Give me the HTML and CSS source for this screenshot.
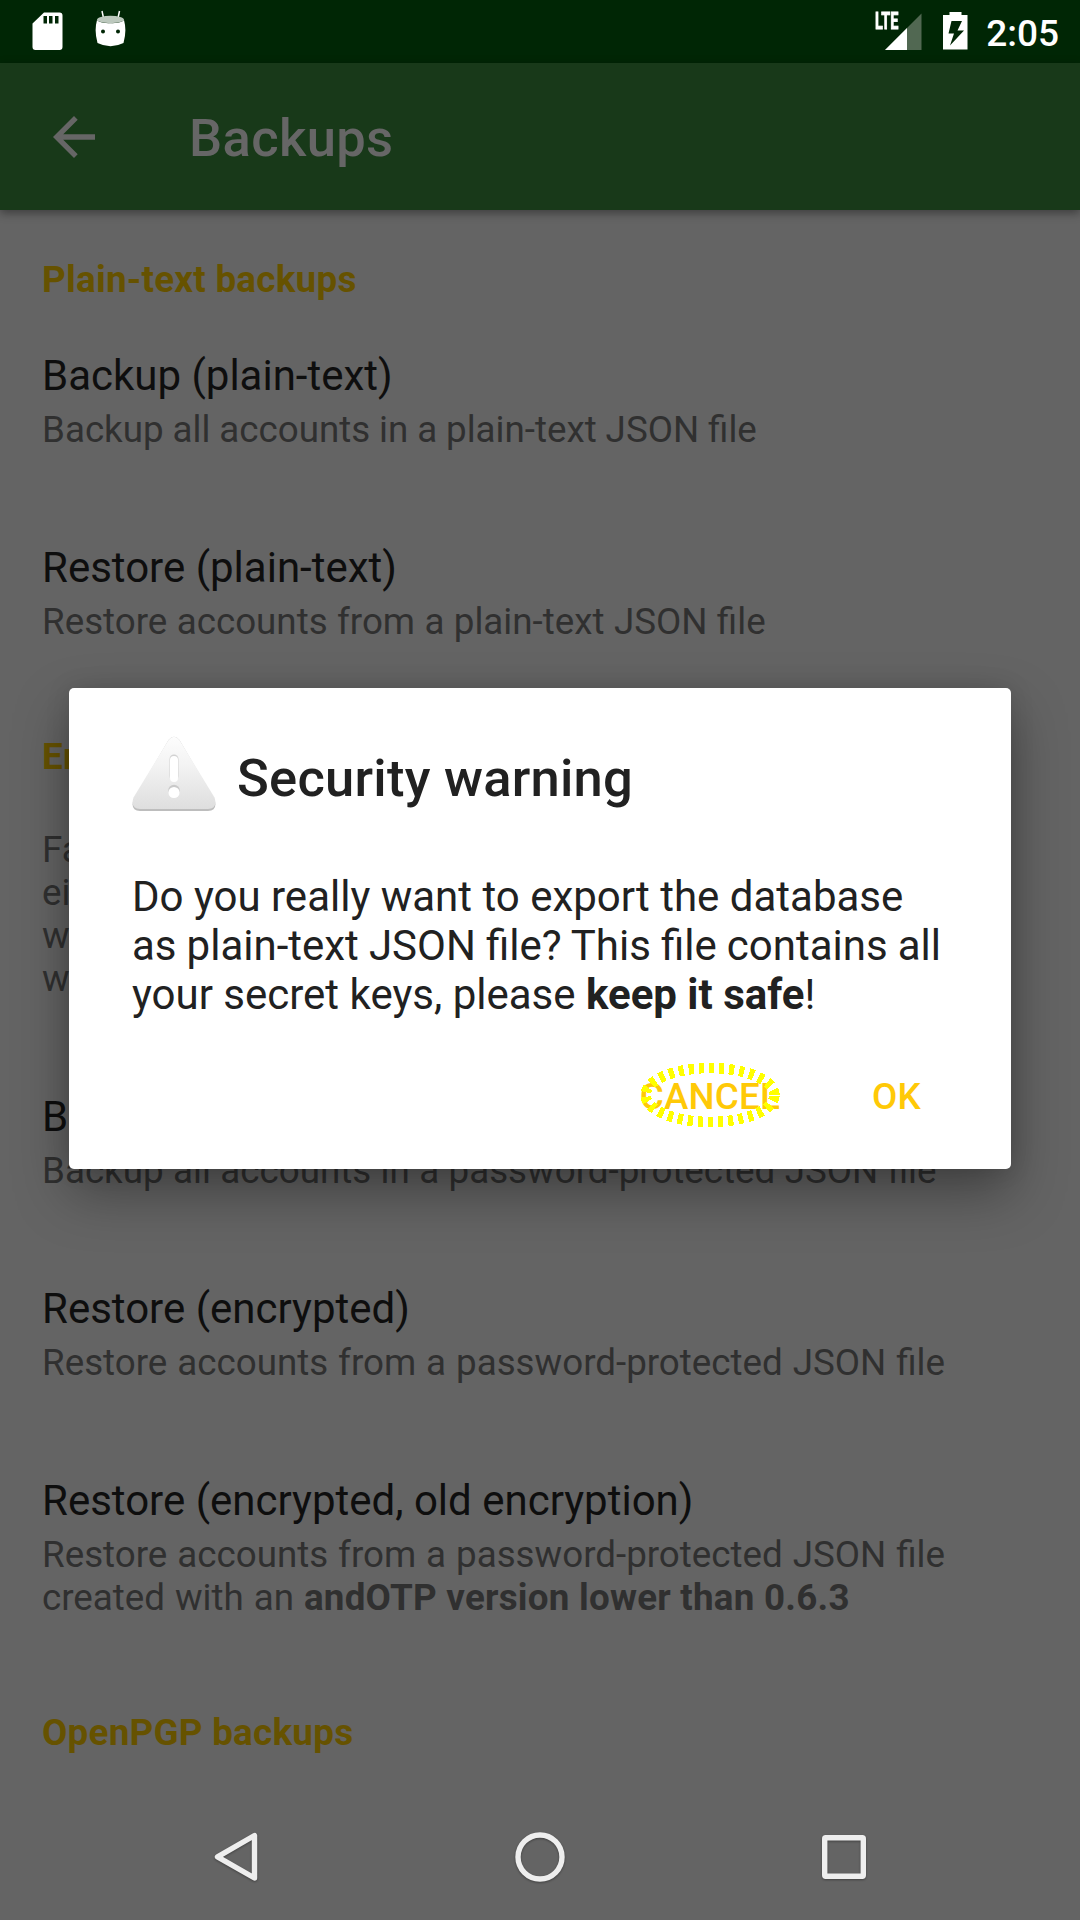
FILE: index.html
```html
<!DOCTYPE html>
<html lang="en">
<head>
<meta charset="utf-8">
<title>Backups</title>
<link rel="stylesheet" href="styles.css">
</head>
<body>
<div class="screen">
  <header class="status-bar">
    <div class="status-left">
      <svg class="icon-sd" width="31" height="39" viewBox="0 0 31 39"><path fill="#fff" fill-rule="evenodd" d="M12 .5H27.500Q30.500.5 30.500 3.500V35Q30.500 38 27.500 38H3.500Q.5 38 .5 35V11.500ZM11.500 4V11.500H15V4ZM17 4V11.500H20.500V4ZM23 4V11.500H26.500V4Z"/></svg>
      <svg class="icon-droid" width="31" height="37" viewBox="0 0 31 37"><path d="M7 1L8.500 8M24.500 1L23 8" stroke="#fff" stroke-width="1.500" fill="none"/><ellipse cx="15.500" cy="9.500" rx="13.500" ry="3.700" fill="#bcc8bd"/><path fill="#fff" fill-rule="evenodd" d="M2 10C5 14.300 26 14.300 29 10Q32 21 28.500 33Q15.500 39.500 2.500 33Q-1 21 2 10ZM6 21.500a2 2 0 1 0 4 0a2 2 0 1 0-4 0ZM21 21.500a2 2 0 1 0 4 0a2 2 0 1 0-4 0Z"/></svg>
    </div>
    <div class="status-right">
      <div class="signal">
        <svg width="37" height="37" viewBox="0 0 37 37"><path d="M36.500.5V37H0Z" fill="#516852"/><path d="M22 15V37H0Z" fill="#fff"/></svg>
        <span class="lte">LTE</span>
      </div>
      <svg class="icon-battery" width="25" height="38" viewBox="0 0 25 38"><path fill="#fff" fill-rule="evenodd" d="M6.500 0H18.500V3H24.500V37.500H0V3H6.500ZM8.500 9L5.500 21.500H11L7 33.500L21 18.500H14.500L19 9Z"/></svg>
      <span class="clock">2:05</span>
    </div>
  </header>
  <div class="app-bar">
    <svg class="icon-back" width="42" height="42" viewBox="0 0 42 42"><path d="M42 18.300V23.700H10.200L24.700 38.200L21 42L0 21L21 0L24.700 3.800L10.200 18.300Z" fill="#666"/></svg>
    <h1 class="app-title">Backups</h1>
  </div>
  <main class="settings">
    <h2 class="section">Plain-text backups</h2>
    <div class="row"><p class="name">Backup (plain-text)</p><p class="summary narrow">Backup all accounts in a plain-text JSON file</p></div>
    <div class="row"><p class="name">Restore (plain-text)</p><p class="summary wide">Restore accounts from a plain-text JSON file</p></div>
    <h2 class="section">En</h2>
    <div class="row note"><p class="summary">Fa<br>ei<br>w<br>w</p></div>
    <div class="row"><p class="name">Backup (encrypted)</p><p class="summary wide">Backup all accounts in a password-protected JSON file</p></div>
    <div class="row"><p class="name">Restore (encrypted)</p><p class="summary wider">Restore accounts from a password-protected JSON file</p></div>
    <div class="row"><p class="name">Restore (encrypted, old encryption)</p><p class="summary wider">Restore accounts from a password-protected JSON file<br>created with an <b>andOTP version lower than 0.6.3</b></p></div>
    <h2 class="section">OpenPGP backups</h2>
  </main>
  <nav class="nav-bar">
    <svg class="nav-icon" width="60" height="60" viewBox="0 0 60 60"><path d="M48.500 8.500V51L11.500 29.800Z"/></svg>
    <svg class="nav-icon" width="60" height="60" viewBox="0 0 60 60"><circle cx="30" cy="30" r="22"/></svg>
    <svg class="nav-icon" width="60" height="60" viewBox="0 0 60 60"><rect x="10.700" y="10.700" width="38.600" height="38.600" rx="1"/></svg>
  </nav>
  <section class="dialog">
    <div class="dialog-head">
      <svg class="icon-warning" width="84" height="76" viewBox="0 0 84 76">
        <defs><linearGradient id="metal" x1="0" y1="0" x2="0" y2="1"><stop offset="0" stop-color="#fdfdfd"/><stop offset=".4" stop-color="#f3f3f3"/><stop offset="1" stop-color="#dedede"/></linearGradient></defs>
        <path d="M36.500 4Q42-2.500 47.500 4L82.500 63.500Q86 74.500 76 75H8Q-2 74.500 1.500 63.500Z" fill="#bdbdbd"/>
        <path d="M36.500 4Q42-2.500 47.500 4L82.500 61.500Q86 72.500 76 73H8Q-2 72.500 1.500 61.500Z" fill="url(#metal)"/>
        <rect x="37.500" y="18.500" width="9" height="26" rx="4.500" fill="#d2d2d2"/><rect x="38" y="20" width="8" height="26" rx="4" fill="#fff"/>
        <circle cx="42" cy="54.500" r="5.800" fill="#c9c9c9"/><circle cx="42" cy="56.500" r="5.600" fill="#fff"/>
      </svg>
      <h2 class="dialog-title">Security warning</h2>
    </div>
    <p class="message">Do you really want to export the database<br><span class="tight">as plain-text JSON file? This file contains all</span><br>your secret keys, please <b>keep it safe</b>!</p>
    <div class="actions">
      <span class="action">CANCEL<svg class="marker" width="140" height="66" viewBox="0 0 140 66"><ellipse cx="70" cy="33" rx="64.500" ry="27"/></svg></span>
      <span class="action">OK</span>
    </div>
  </section>
</div>
</body>
</html>
```
FILE: styles.css
```css
* { box-sizing: border-box; }
body, h1, h2, p { margin: 0; }
body { font-family: Roboto, "Liberation Sans", sans-serif; }
svg { display: block; flex: none; }
.screen { position: relative; width: 1080px; height: 1920px; overflow: hidden; background: #646464; display: flex; flex-direction: column; }
.status-bar { height: 63px; flex: none; background: #002605; display: flex; justify-content: space-between; padding: 0 21px 0 32px; color: #fff; }
.status-left, .status-right { display: flex; align-items: flex-start; }
.icon-sd { margin-top: 12px; }
.icon-droid { margin: 10px 0 0 32px; }
.signal { position: relative; margin-top: 13px; }
.lte { position: absolute; left: -10px; top: -3px; font-size: 23px; font-weight: 700; line-height: 23px; transform: scaleX(.63); transform-origin: left; -webkit-text-stroke: .8px #fff; }
.icon-battery { margin: 12px 0 0 21px; }
.clock { margin-left: 18px; font-size: 37px; font-weight: 500; line-height: 67px; }
.app-bar { height: 147px; flex: none; background: #183919; display: flex; align-items: center; padding: 0 53px; box-shadow: 0 3px 9px rgba(0,0,0,.4); color: #666; }
.app-title { margin: 3px 0 0 94px; font-size: 52.5px; font-weight: 500; line-height: 62px; letter-spacing: .35px; }
.settings { flex: 1; padding: 2px 42px 0; }
.section { height: 93px; padding-top: 46px; font-size: 36.75px; line-height: 43px; font-weight: 700; letter-spacing: .27px; color: #665200; }
.row { padding: 46px 0; }
.name { font-size: 42px; line-height: 49px; margin-bottom: 8px; color: #0e0e0e; }
.summary { font-size: 36.75px; line-height: 43px; color: #303030; white-space: nowrap; }
.summary.narrow { word-spacing: -.25px; }
.summary.wide { word-spacing: .25px; }
.summary.wider { word-spacing: .8px; }
.summary b { letter-spacing: .24px; word-spacing: 0; }
.nav-bar { height: 126px; flex: none; display: flex; justify-content: space-between; align-items: center; padding: 0 206px; }
.nav-icon { fill: none; stroke: #eee; stroke-width: 5.4; stroke-linejoin: round; filter: drop-shadow(0 1px 1px rgba(0,0,0,.35)); }
.dialog { position: absolute; left: 69px; top: 688px; width: 942px; height: 481px; padding: 48px 63px 0; background: #fff; border-radius: 5px; color: #212121; box-shadow: 0 24px 54px rgba(0,0,0,.34), 0 0 24px rgba(0,0,0,.12); }
.dialog-head { display: flex; align-items: flex-start; gap: 21px; }
.dialog-title { margin-top: 11px; font-size: 52.5px; font-weight: 500; line-height: 62px; letter-spacing: .25px; }
.message { margin-top: 60px; font-size: 42px; line-height: 49px; white-space: nowrap; }
.tight { word-spacing: -.35px; }
.actions { display: flex; justify-content: flex-end; gap: 92px; margin-top: 56px; padding-right: 27px; }
.action { position: relative; font-size: 36.75px; line-height: 43px; font-weight: 500; letter-spacing: .2px; color: #ffc907; }
.marker { position: absolute; left: 0; top: -13px; fill: none; stroke: #ff0; stroke-width: 10.5; stroke-dasharray: 5.2 4.9; stroke-dashoffset: -1; shape-rendering: crispEdges; }
```
